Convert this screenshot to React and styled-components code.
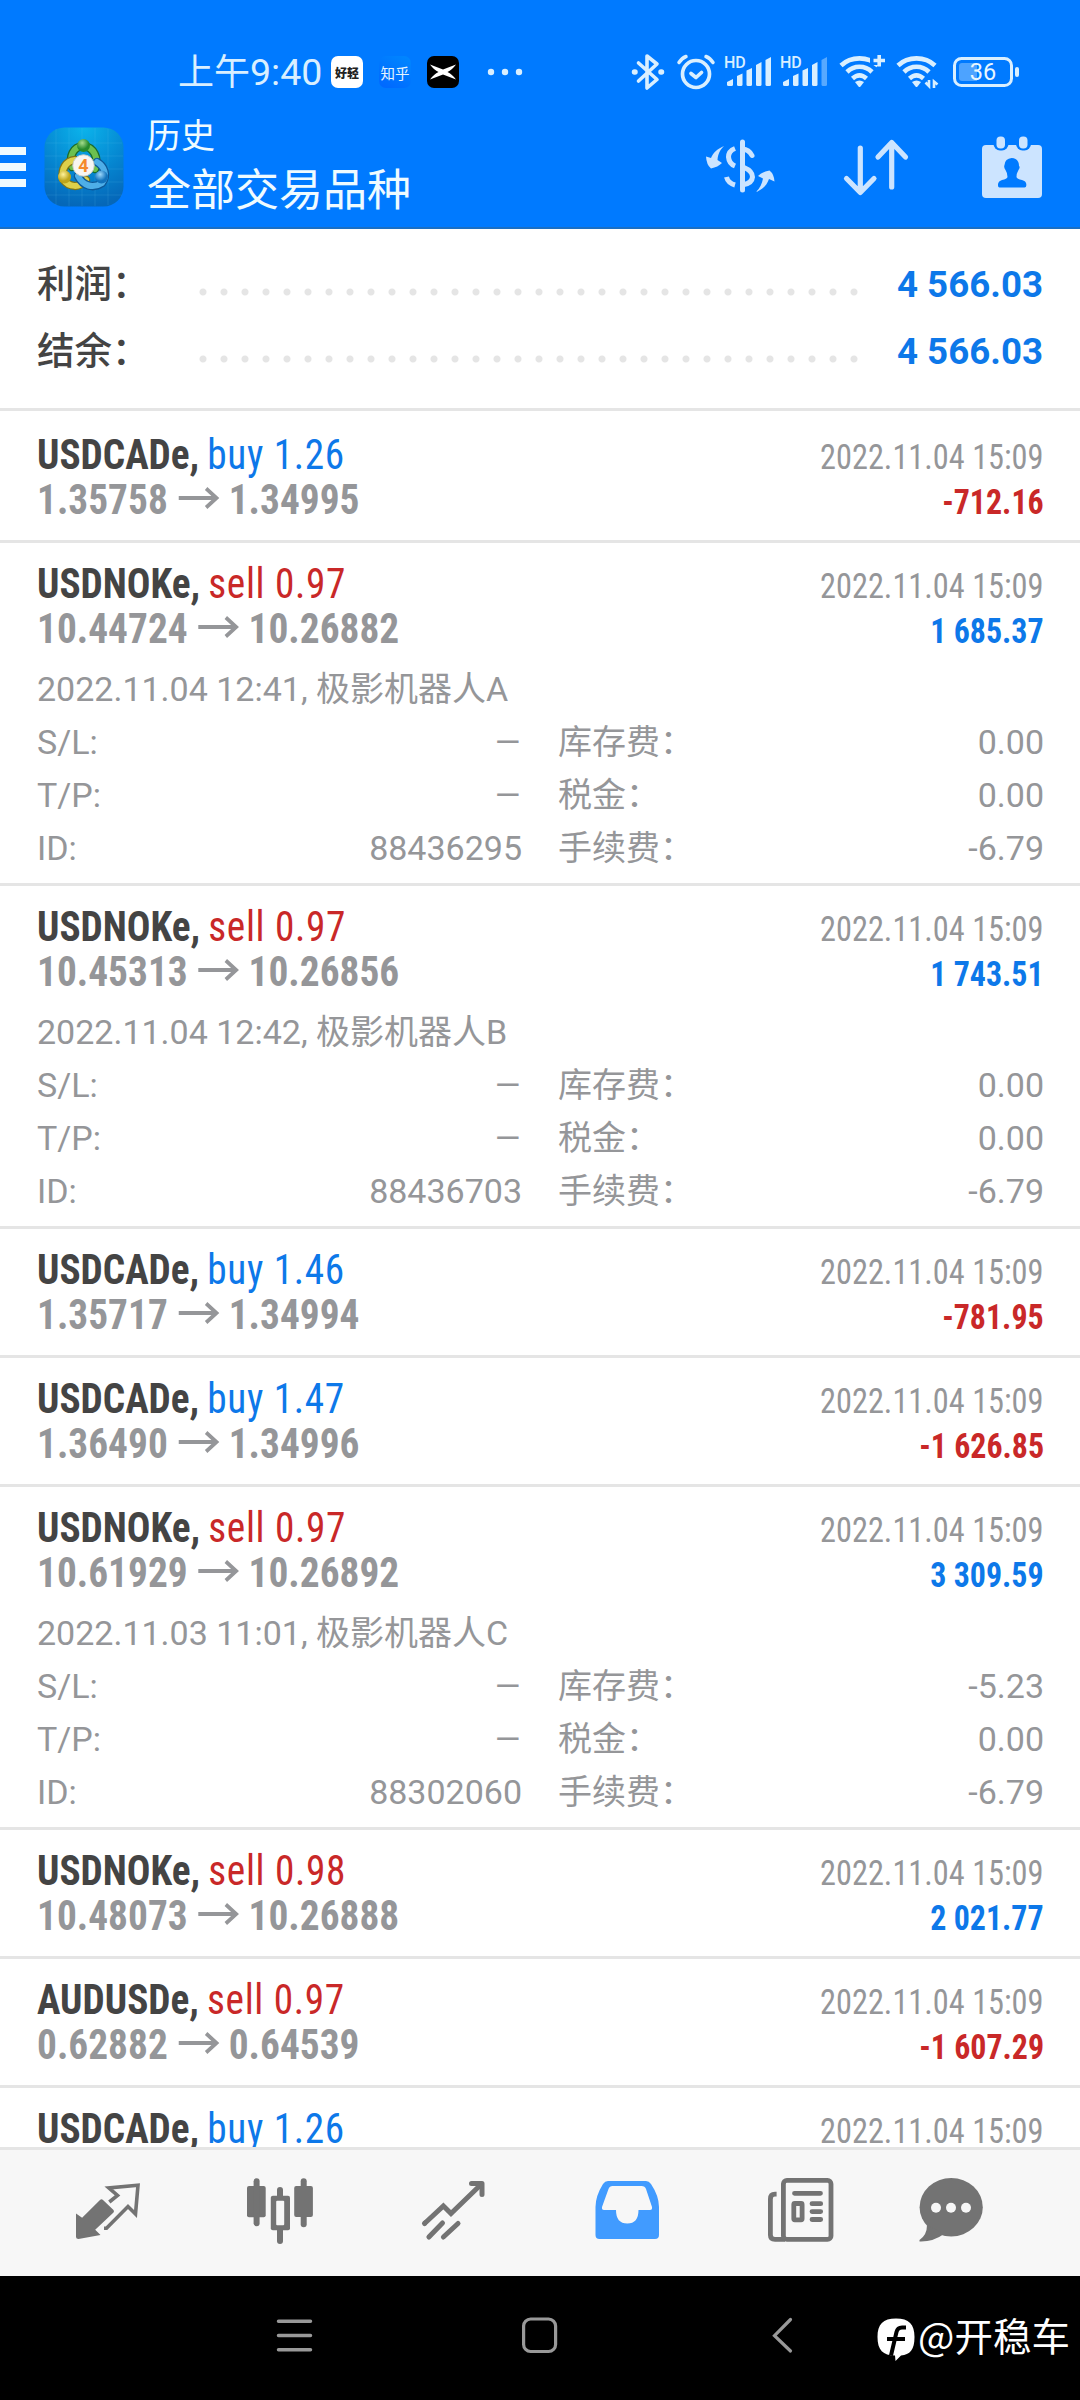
import React from 'react';
import styled, { createGlobalStyle } from 'styled-components';

const GlobalStyle = createGlobalStyle`
  * {
    box-sizing: border-box;
  }
  body {
    margin: 0;
    font-family: Roboto, 'Noto Sans CJK SC', sans-serif;
  }
`;

const BLUE = '#0d78e9';
const RED = '#c92828';

const Screen = styled.div`
  width: 1080px;
  height: 2400px;
  display: flex;
  flex-direction: column;
  overflow: hidden;
  background-color: white;
`;

const Header = styled.header`
  height: 229px;
  flex: none;
  background-color: #007aff;
  border-bottom: 2px solid #1a6fc4;
`;

const StatusBar = styled.div`
  height: 112px;
  padding: 32px 61px 0 178px;
  display: flex;
  align-items: center;
  color: #d9efff;
`;

const Clock = styled.span`
  width: 153px;
  font-size: 36px;
  line-height: 40px;
  white-space: nowrap;
  b {
    font-size: 37.5px;
    font-weight: 400;
  }
`;

const AppBadge = styled.span`
  width: 32px;
  height: 32px;
  margin-right: 16px;
  border-radius: 7px;
  display: flex;
  align-items: center;
  justify-content: center;
  white-space: nowrap;
  font-size: ${props => props.$size || 12}px;
  font-weight: ${props => props.$weight || 400};
  color: ${props => props.$color};
  background: ${props => props.$bg};
`;

const StatusIcons = styled.div`
  flex: 1;
  display: flex;
  justify-content: flex-end;
  align-items: center;
`;

const StatusSvg = styled.svg`
  flex: none;
  margin-left: ${props => props.$gap}px;
  overflow: visible;
`;

const TitleBar = styled.div`
  height: 115px;
  display: flex;
  align-items: center;
  padding: 0 36px 6px 0;
`;

const MenuButton = styled.div`
  width: 26px;
  height: 40px;
  margin-right: 18px;
  display: flex;
  flex-direction: column;
  justify-content: space-between;
  span {
    height: 8px;
    background-color: #eefaff;
  }
`;

const Titles = styled.div`
  margin-left: 23px;
  flex: 1;
  color: #effbff;
  h1,
  h2 {
    margin: 0;
    font-weight: 400;
  }
  h1 {
    font-size: 34px;
    line-height: 48px;
  }
  h2 {
    font-size: 44px;
    line-height: 62px;
  }
`;

const HeaderIcon = styled.svg`
  flex: none;
  margin-left: ${props => props.$gap || 0}px;
`;

const Summary = styled.section`
  height: 182px;
  flex: none;
  padding: 20px 37px 0;
  border-bottom: 3px solid #e5e5e5;
`;

const SummaryRow = styled.div`
  height: 67px;
  display: flex;
  align-items: center;
`;

const SummaryLabel = styled.span`
  width: 162px;
  padding-bottom: 5px;
  font-size: 37.5px;
  font-weight: 500;
  color: #444;
`;

const Dots = styled.span`
  width: 672px;
  height: 8px;
  margin-top: 18px;
  background: radial-gradient(circle at 4px 4px, #e5e5e5 3px, transparent 4px) 0 0 / 21px 8px;
`;

const SummaryValue = styled.span`
  flex: 1;
  padding-top: 4px;
  text-align: right;
  font-size: 36.7px;
  font-weight: 700;
  white-space: nowrap;
  color: ${BLUE};
`;

const List = styled.main`
  flex: 1;
  min-height: 0;
  padding-top: 3px;
  overflow: hidden;
`;

const Deal = styled.article`
  height: ${props => (props.$open ? 343 : 129)}px;
  padding: 15px 36px 0 37px;
  border-bottom: 3px solid #e5e5e5;
`;

const Line = styled.div`
  height: 45px;
  display: flex;
  justify-content: space-between;
  align-items: baseline;
  line-height: 52px;
  white-space: nowrap;
  font-family: 'Roboto Condensed', Roboto, 'Noto Sans CJK SC', sans-serif;
  font-stretch: 75%;
`;

const Symbol = styled.span`
  font-size: 42px;
  font-weight: 700;
  color: #444;
  transform: scaleX(0.935);
  transform-origin: left;
`;

const Side = styled.span`
  margin-left: -1px;
  font-weight: 400;
  letter-spacing: 0.7px;
  color: ${props => (props.$sell ? RED : BLUE)};
`;

const Prices = styled.span`
  font-size: 42px;
  font-weight: 700;
  color: #959699;
  transform: scaleX(0.937);
  transform-origin: left;
`;

const Arrow = styled.svg`
  margin: 0 10px 0 11px;
`;

const Time = styled.span`
  font-size: 34.5px;
  color: #959699;
  transform: scaleX(0.937);
  transform-origin: right;
`;

const Profit = styled.span`
  font-size: 34.5px;
  font-weight: 700;
  color: ${props => (props.$loss ? RED : BLUE)};
  transform: scaleX(0.925);
  transform-origin: right;
`;

const Details = styled.div`
  padding-top: 15px;
  font-size: 34px;
  line-height: 53px;
  color: #959699;
`;

const DetailGrid = styled.div`
  display: grid;
  grid-template-columns: 485px 486px;
  column-gap: 36px;
  grid-auto-rows: 53px;
`;

const Detail = styled.div`
  height: 53px;
  display: flex;
  justify-content: space-between;
`;

const Dash = styled.span`
  transform: scaleX(1.28);
  transform-origin: right;
`;

const TabBar = styled.nav`
  height: 129px;
  flex: none;
  padding: 0 53px 0 72px;
  display: flex;
  gap: 101px;
  border-top: 3px solid #e5e5e5;
  background-color: #f7f7f7;
  color: #737373;
  svg {
    flex: none;
    margin-top: 24px;
  }
  svg:last-child {
    margin-left: -22px;
  }
`;

const SystemBar = styled.footer`
  height: 124px;
  flex: none;
  padding: 0 10px 0 275px;
  display: flex;
  align-items: center;
  background-color: black;
  color: #999;
`;

const NavIcon = styled.svg`
  flex: none;
  margin: 0 ${props => props.$gap}px 4px 0;
`;

const Watermark = styled.div`
  display: flex;
  align-items: center;
  padding-bottom: 9px;
  color: white;
  font-size: 38.5px;
  font-family: 'Noto Sans CJK SC', sans-serif;
  white-space: nowrap;
  svg {
    margin: 13px 3px 0 0;
  }
`;

const Wifi = () => (
  <g fill="none" stroke="currentColor" strokeWidth="4.6">
    <path d="M2 11.5C12 2 29 2 39 11.5" />
    <path d="M8 18C15 11 26 11 33 18" />
    <path d="M13.5 24.5C18 20.5 23 20.5 27.5 24.5" />
    <path d="M16 28Q20.500 25 25 28L21.500 32.500Q20.500 33.500 19.500 32.500Z" fill="currentColor" stroke="none" />
  </g>
);

const Signal = ({ gap, weak }) => (
  <StatusSvg $gap={gap} width="47" height="32" viewBox="0 0 47 32" fill="currentColor">
    <text x="-1" y="12" fontSize="16" fontWeight="500" fontFamily="Roboto">HD</text>
    <path d="M2 26L8 23V28.500Q8 30 6.500 30H3.500Q2 30 2 28.500Z" />
    <path d="M12 20L17.500 17.500V28.500Q17.500 30 16 30H13.500Q12 30 12 28.500Z" />
    <path d="M21.500 14.500L27 12V28.500Q27 30 25.500 30H23Q21.500 30 21.500 28.500Z" />
    <path d="M31 9L36.500 6V28.500Q36.500 30 35 30H32.500Q31 30 31 28.500Z" />
    <path opacity={weak ? 0.4 : 1} d="M40.500 4L46 1V28.500Q46 30 44.500 30H42Q40.500 30 40.500 28.500Z" />
  </StatusSvg>
);

const Status = () => (
  <StatusBar>
    <Clock>
      上午<b>9:40</b>
    </Clock>
    <AppBadge $bg="white" $color="#222" $weight={900}>好轻</AppBadge>
    <AppBadge $bg="linear-gradient(30deg, #0066ff, #0088ff)" $color="#e6f4ff" $size={14.5}>知乎</AppBadge>
    <AppBadge $bg="black">
      <svg width="28" height="18" viewBox="0 0 28 18" fill="white">
        <path d="M1 1.500L14 6.500L27 1.500Q23 7 18.500 9Q23 11 27 16.500L14 11.500L1 16.500Q5 11 9.500 9Q5 7 1 1.500Z" />
      </svg>
    </AppBadge>
    <StatusSvg $gap={12} width="36" height="8" viewBox="0 0 36 8" fill="currentColor">
      <circle cx="4" cy="4" r="3.200" />
      <circle cx="18" cy="4" r="3.200" />
      <circle cx="32" cy="4" r="3.200" />
    </StatusSvg>
    <StatusIcons>
      <StatusSvg $gap={0} width="34" height="38" viewBox="0 0 34 38" fill="none" stroke="currentColor" strokeWidth="3.600" strokeLinejoin="round" strokeLinecap="round">
        <path d="M7.500 10L26 26.500L16 35V3L26 11L7.500 28" />
        <path d="M3.500 19H4M30 19H30.500" strokeWidth="5.500" />
      </StatusSvg>
      <StatusSvg $gap={12} width="38" height="36" viewBox="0 0 38 36" fill="none" stroke="currentColor" strokeWidth="3.700" strokeLinecap="round">
        <circle cx="19" cy="20" r="13.500" />
        <path d="M2 8.500Q5 4 9 2.500M36 8.500Q33 4 29 2.500" strokeWidth="3.500" />
        <path d="M14 19.500L19 23.500L24.500 18.500" strokeLinejoin="round" />
      </StatusSvg>
      <Signal gap={10} />
      <Signal gap={9} weak />
      <StatusSvg $gap={11} width="47" height="36" viewBox="0 0 47 36" fill="currentColor">
        <Wifi />
        <rect x="31" y="0" width="16" height="11" fill="#007aff" />
        <path d="M34.500 6.500H46M40.200 1V12.500" stroke="currentColor" strokeWidth="3.600" />
      </StatusSvg>
      <StatusSvg $gap={10} width="44" height="36" viewBox="0 0 44 36" fill="currentColor">
        <Wifi />
        <path d="M29.500 28.500L33 32V26M38 34V27.500L41.500 30.500" stroke="currentColor" strokeWidth="2.600" fill="none" />
      </StatusSvg>
      <StatusSvg $gap={13} width="66" height="32" viewBox="0 0 66 32">
        <rect x="1.500" y="2.500" width="57" height="27" rx="7" fill="none" stroke="currentColor" strokeWidth="3" />
        <path d="M6 10Q6 7 9 7H24V25H9Q6 25 6 22Z" fill="#4da3ff" />
        <rect x="62" y="11" width="4" height="10" rx="2" fill="currentColor" />
        <text x="30" y="24.200" fontSize="23.500" textAnchor="middle" fontFamily="Roboto" fontWeight="400" fill="#e8f6ff">36</text>
      </StatusSvg>
    </StatusIcons>
  </StatusBar>
);

const Logo = () => (
  <svg width="80" height="80" viewBox="0 0 80 80">
    <defs>
      <radialGradient id="tile" cx="50%" cy="0%" r="100%">
        <stop offset="0" stopColor="#0bb4ec" />
        <stop offset="0.600" stopColor="#0584cf" />
        <stop offset="1" stopColor="#0567b8" />
      </radialGradient>
      <radialGradient id="green" cx="40%" cy="30%">
        <stop offset="0" stopColor="#a5dc8c" />
        <stop offset="1" stopColor="#268a2c" />
      </radialGradient>
      <radialGradient id="yellow" cx="40%" cy="30%">
        <stop offset="0" stopColor="#fff29a" />
        <stop offset="1" stopColor="#bda51b" />
      </radialGradient>
      <radialGradient id="azure" cx="40%" cy="30%">
        <stop offset="0" stopColor="#9dd8fb" />
        <stop offset="1" stopColor="#1273bd" />
      </radialGradient>
    </defs>
    <rect x="0.500" y="0.500" width="79" height="79" rx="20" fill="url(#tile)" />
    <path d="M12 2V78M25 1V79M38 1V79M51 1V79M64 2V78M2 16H78M1 29H79M1 42H79M1 55H79M2 68H78" stroke="#6fd0f5" strokeOpacity="0.150" />
    <g fill="none" strokeLinecap="round">
      <path d="M28 40C25 29 29 20 39 19C50 20 55 31 51 42" stroke="#1b6b2c" strokeWidth="8.500" />
      <path d="M28 40C25 29 29 20 39 19C50 20 55 31 51 42" stroke="#6cc04f" strokeWidth="6" />
      <path d="M31 33C22 34 17 42 19 52C25 61 36 61 42 53" stroke="#7f7416" strokeWidth="8.500" />
      <path d="M31 33C22 34 17 42 19 52C25 61 36 61 42 53" stroke="#ddd04a" strokeWidth="6" />
      <path d="M34 49C39 59 49 62 58 56C64 48 60 39 53 35" stroke="#0d5898" strokeWidth="8.500" />
      <path d="M34 49C39 59 49 62 58 56C64 48 60 39 53 35" stroke="#4eaee8" strokeWidth="6" />
    </g>
    <circle cx="39.500" cy="18.500" r="6.500" fill="url(#green)" />
    <circle cx="20.500" cy="50" r="6.500" fill="url(#yellow)" />
    <circle cx="57.500" cy="50" r="6.500" fill="url(#azure)" />
    <circle cx="39.500" cy="38.500" r="10.700" fill="#f8f5f2" stroke="#c9cfc8" />
    <text x="39.500" y="45" textAnchor="middle" fontFamily="Roboto" fontSize="18" fontWeight="700" fill="#f58a2c">4</text>
  </svg>
);

const Toolbar = () => (
  <TitleBar>
    <MenuButton>
      <span />
      <span />
      <span />
    </MenuButton>
    <Logo />
    <Titles>
      <h1>历史</h1>
      <h2>全部交易品种</h2>
    </Titles>
    <HeaderIcon width="70" height="64" viewBox="705 133 70 64" fill="#cce4ff">
      <path d="M724 144C717 147 713 151 711 156L706 154.500Q706.500 163 711 166.500Q718 165 722 161L717.500 158C718 152 720 148 724 144Z" />
      <path d="M756 190C763 187 767 183 769 177L774.500 179.500Q774 172 769.500 168.500Q762 170 758 174L763 176.500C762 182 760 186 756 190Z" />
      <g fill="none" stroke="#cce4ff" strokeWidth="5" strokeLinecap="round">
        <path d="M742.500 140V188" />
        <path d="M742.500 147Q749 147.500 752 153.500" />
        <path d="M744 165.500Q752.500 169 752.500 175Q752 181 744 182.500" />
        <path d="M726.500 175Q728 181 735 183" strokeLinecap="butt" />
        <path d="M735 146.500Q728.500 149 728.500 155Q729 161.500 735 164" strokeLinecap="butt" />
      </g>
    </HeaderIcon>
    <HeaderIcon $gap={67} width="70" height="64" viewBox="842 133 70 64" fill="none" stroke="#cce4ff" strokeWidth="5.200" strokeLinecap="round" strokeLinejoin="round">
      <path d="M860.300 146V189.500M846.500 176.500L860.300 190.500L874 176.500" />
      <path d="M891.700 185V141M878 155L891.700 140.500L905.500 155" />
    </HeaderIcon>
    <HeaderIcon $gap={68} width="64" height="64" viewBox="980 133 64 64" fill="#cce4ff">
      <rect x="982" y="143" width="60" height="53" rx="4" />
      <rect x="993.500" y="130" width="15" height="18.500" rx="6.500" fill="#007aff" />
      <rect x="1016" y="130" width="15" height="18.500" rx="6.500" fill="#007aff" />
      <rect x="996.500" y="134.500" width="8.500" height="12" rx="4" />
      <rect x="1019" y="134.500" width="8.500" height="12" rx="4" />
      <path
        fill="#007aff"
        d="M1011.700 156Q1019 156.500 1019 164Q1020.500 165 1018.500 168Q1016.500 171 1016.500 175Q1017 177 1022 178Q1026 179 1026.300 182V183.500Q1026.300 185.500 1024.500 185.500H999.500Q998 185.500 998 183.500V182Q998.500 179 1002 178Q1007 177 1007.500 175Q1007.500 171 1005.500 168Q1003.500 165 1004.500 163Q1005 156.500 1011.700 156Z"
      />
    </HeaderIcon>
  </TitleBar>
);

const deals = [
  { symbol: 'USDCADe', side: 'buy', lot: '1.26', from: '1.35758', to: '1.34995', profit: '-712.16' },
  {
    symbol: 'USDNOKe', side: 'sell', lot: '0.97', from: '10.44724', to: '10.26882', profit: '1 685.37',
    opened: '2022.11.04 12:41, 极影机器人A', id: '88436295', swap: '0.00',
  },
  {
    symbol: 'USDNOKe', side: 'sell', lot: '0.97', from: '10.45313', to: '10.26856', profit: '1 743.51',
    opened: '2022.11.04 12:42, 极影机器人B', id: '88436703', swap: '0.00',
  },
  { symbol: 'USDCADe', side: 'buy', lot: '1.46', from: '1.35717', to: '1.34994', profit: '-781.95' },
  { symbol: 'USDCADe', side: 'buy', lot: '1.47', from: '1.36490', to: '1.34996', profit: '-1 626.85' },
  {
    symbol: 'USDNOKe', side: 'sell', lot: '0.97', from: '10.61929', to: '10.26892', profit: '3 309.59',
    opened: '2022.11.03 11:01, 极影机器人C', id: '88302060', swap: '-5.23',
  },
  { symbol: 'USDNOKe', side: 'sell', lot: '0.98', from: '10.48073', to: '10.26888', profit: '2 021.77' },
  { symbol: 'AUDUSDe', side: 'sell', lot: '0.97', from: '0.62882', to: '0.64539', profit: '-1 607.29' },
  { symbol: 'USDCADe', side: 'buy', lot: '1.26' },
];

const DealRow = ({ deal }) => (
  <Deal $open={!!deal.opened}>
    <Line>
      <Symbol>
        {deal.symbol},{' '}
        <Side $sell={deal.side === 'sell'}>
          {deal.side} {deal.lot}
        </Side>
      </Symbol>
      <Time>2022.11.04 15:09</Time>
    </Line>
    {deal.profit && (
      <Line>
        <Prices>
          {deal.from}
          <Arrow width="44" height="30" viewBox="0 0 44 30" fill="none" stroke="currentColor" strokeWidth="4">
            <path d="M0 14H41M29.500 4.500L40.500 14L29.500 23.500" />
          </Arrow>
          {deal.to}
        </Prices>
        <Profit $loss={deal.profit.startsWith('-')}>{deal.profit}</Profit>
      </Line>
    )}
    {deal.opened && (
      <Details>
        {deal.opened}
        <DetailGrid>
          <Detail><span>S/L:</span><Dash>–</Dash></Detail>
          <Detail><span>库存费：</span><span>{deal.swap}</span></Detail>
          <Detail><span>T/P:</span><Dash>–</Dash></Detail>
          <Detail><span>税金：</span><span>0.00</span></Detail>
          <Detail><span>ID:</span><span>{deal.id}</span></Detail>
          <Detail><span>手续费：</span><span>-6.79</span></Detail>
        </DetailGrid>
      </Details>
    )}
  </Deal>
);

const Tabs = () => (
  <TabBar>
    <svg width="72" height="72" viewBox="72 2174 72 72">
      <path fill="currentColor" d="M76 2213.500L82.100 2217.700L100 2200Q101.500 2198.500 103 2200L113.500 2210Q114.500 2211.300 113.500 2212.500L95.200 2229.700L100.500 2235L78.500 2239Q76 2239 76 2237Z" />
      <path fill="none" stroke="currentColor" strokeWidth="3.600" d="M109.300 2202L117.500 2195.500L108.800 2187.900L138 2185.300L135.500 2214L128 2206.500L106.500 2228.200H104" />
    </svg>
    <svg width="72" height="72" viewBox="245 2174 72 72" fill="currentColor">
      <rect x="247" y="2186" width="18.700" height="31.300" rx="2" />
      <rect x="253.600" y="2178.300" width="6" height="48" rx="3" />
      <rect x="294.200" y="2186" width="18.700" height="31" rx="2" />
      <rect x="300.700" y="2178.300" width="6" height="49" rx="3" />
      <rect x="277" y="2187" width="6" height="57" rx="3" />
      <rect x="270.800" y="2195.700" width="19.200" height="34.600" rx="2" />
      <rect x="276.200" y="2200.700" width="8" height="24.500" rx="1" fill="#f7f7f7" />
    </svg>
    <svg width="72" height="72" viewBox="418 2174 72 72" fill="none" stroke="currentColor" strokeWidth="5" strokeLinecap="round">
      <path d="M424 2224L443.400 2206L451 2213.500L481 2184.500" strokeLinecap="butt" />
      <path d="M424.500 2223.500L425 2223M428.900 2237L442.500 2223M443.400 2237L458 2223.500" />
      <path d="M471.500 2183.500H482V2194.500" strokeLinejoin="round" />
    </svg>
    <svg width="72" height="72" viewBox="591 2174 72 72">
      <path
        fill="#419bff"
        fillRule="evenodd"
        d="M608 2181H646Q649 2181 651 2184Q659 2196 659 2207V2235Q659 2239 655 2239H599.500Q595.500 2239 595.500 2235V2207Q595.500 2196 603 2184Q605 2181 608 2181ZM612.500 2186Q609.500 2186 608.500 2189L602 2207Q601.500 2210 604 2210H616Q616 2223.500 627.300 2223.500Q638.500 2223.500 638.500 2210H650Q652.500 2210 652 2207L646 2189Q645 2186 641.500 2186Z"
      />
    </svg>
    <svg width="72" height="72" viewBox="765 2174 72 72" fill="none" stroke="currentColor" strokeWidth="4.800">
      <rect x="784.400" y="2180.400" width="47.600" height="59" rx="3.500" />
      <path d="M777.600 2194.200H776Q771.400 2194.200 771.400 2199V2235Q771.400 2239.400 776 2239.400H786" />
      <path strokeLinecap="round" d="M795.500 2193.300H821.500M813 2203.700H821.700M813 2211.600H821.700M813 2219.500H821.700" />
      <rect x="794.800" y="2203.500" width="8.300" height="16.300" rx="1" />
    </svg>
    <svg width="72" height="72" viewBox="915 2174 72 72" fill="currentColor">
      <ellipse cx="951.200" cy="2207.200" rx="31.600" ry="29.200" />
      <path d="M927 2225Q927 2235 919.500 2240V2241.500Q933 2242 944 2234Z" />
      <g fill="#f7f7f7">
        <circle cx="936" cy="2207.700" r="5" />
        <circle cx="951" cy="2207.700" r="5" />
        <circle cx="966" cy="2207.700" r="5" />
      </g>
    </svg>
  </TabBar>
);

const SystemNav = () => (
  <SystemBar>
    <NavIcon $gap={205} width="40" height="40" viewBox="275 2316 40 40" stroke="currentColor" strokeWidth="3.500" strokeLinecap="round">
      <path d="M278.500 2321.300H310.500M278.500 2335.600H310.500M278.500 2349.800H310.500" />
    </NavIcon>
    <NavIcon $gap={212} width="40" height="40" viewBox="520 2316 40 40" fill="none" stroke="currentColor" strokeWidth="3.200">
      <rect x="523.600" y="2319" width="32" height="32.500" rx="7" />
    </NavIcon>
    <NavIcon $gap={80} width="25" height="40" viewBox="772 2316 25 40" fill="none" stroke="currentColor" strokeWidth="3.200" strokeLinecap="round">
      <path d="M790.500 2319.500L774.500 2335.600L790.500 2351" />
    </NavIcon>
    <Watermark>
      <svg width="38" height="44" viewBox="0 0 38 44">
        <path fill="white" d="M19 0.500C32 0.500 37.500 6 37.500 19C37.500 32 33 36.500 24 37.500L18.500 43L18 37.500C6 37.500 0.500 32 0.500 19C0.500 6 6 0.500 19 0.500Z" />
        <path fill="none" stroke="black" strokeWidth="4" d="M29 9.500H25Q20.500 9.500 19.500 14L14 37.500M10 21H28" />
      </svg>
      @开稳车
    </Watermark>
  </SystemBar>
);

const App = () => (
  <Screen>
    <GlobalStyle />
    <Header>
      <Status />
      <Toolbar />
    </Header>
    <Summary>
      {['利润：', '结余：'].map(label => (
        <SummaryRow key={label}>
          <SummaryLabel>{label}</SummaryLabel>
          <Dots />
          <SummaryValue>4 566.03</SummaryValue>
        </SummaryRow>
      ))}
    </Summary>
    <List>
      {deals.map((deal, i) => (
        <DealRow key={i} deal={deal} />
      ))}
    </List>
    <Tabs />
    <SystemNav />
  </Screen>
);

export default App;
